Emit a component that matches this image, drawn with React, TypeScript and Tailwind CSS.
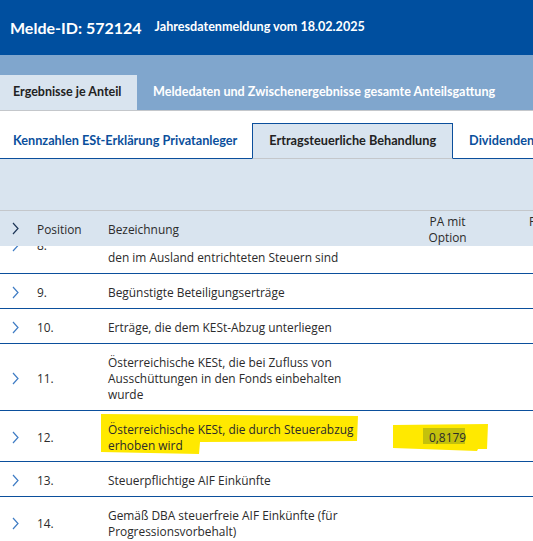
import React from "react";

const body = { fontFamily: '"Open Sans", "Liberation Sans", sans-serif' };
const head = { fontFamily: 'Lato, "Liberation Sans", sans-serif' };

type Row = { pos: string; lines: string[]; value?: string; mark?: boolean };

// row 8 is scrolled under the sticky header, only its last line shows
const rows: Row[] = [
  { pos: "9.", lines: ["Begünstigte Beteiligungserträge"] },
  { pos: "10.", lines: ["Erträge, die dem KESt-Abzug unterliegen"] },
  { pos: "11.", lines: ["Österreichische KESt, die bei Zufluss von", "Ausschüttungen in den Fonds einbehalten", "wurde"] },
  { pos: "12.", lines: ["Österreichische KESt, die durch Steuerabzug", "erhoben wird"], value: "0,8179", mark: true },
  { pos: "13.", lines: ["Steuerpflichtige AIF Einkünfte"] },
  { pos: "14.", lines: ["Gemäß DBA steuerfreie AIF Einkünfte (für", "Progressionsvorbehalt)"] },
];

function Chevron({ color }: { color: string }) {
  return (
    <svg width="7" height="13" viewBox="0 0 7 13" fill="none">
      <path d="M1 1 L6 6.5 L1 12" stroke={color} strokeWidth="1.2" />
    </svg>
  );
}

// marker strokes drawn over row 12
function Marker() {
  return (
    <svg className="absolute left-0 top-0 pointer-events-none" width="533" height="52" viewBox="0 0 533 52">
      <polygon points="101,3 358,5 357,30 200,31 199,43 101,41" fill="#ffe900" />
      <polygon points="393,14 488,13 487,38 478,38 477,40 393,37" fill="#ffe900" />
      <rect x="423" y="17" width="42" height="16" fill="#c4c10c" />
    </svg>
  );
}

export default function App() {
  return (
    <div className="w-[533px] h-[541px] overflow-hidden bg-white">
      <div className="w-[640px]">
        {/* title bar */}
        <div className="h-[55px] bg-[#004f9f] flex items-center pl-[10px] text-white" style={head}>
          <span className="text-[16px] font-bold">Melde-ID: 572124</span>
          <span className="ml-[13px] text-[12.6px] font-bold">Jahresdatenmeldung vom 18.02.2025</span>
        </div>

        {/* first tabs */}
        <div className="h-[55px] bg-[#80a6cd] flex items-end text-[12.5px] font-bold" style={head}>
          <div className="h-[35px] w-[137px] bg-[#d9e4ef] flex items-center pl-[13px] text-[#222]">Ergebnisse je Anteil</div>
          <div className="h-[35px] flex items-center pl-[16px] text-white text-[12.6px]">Meldedaten und Zwischenergebnisse gesamte Anteilsgattung</div>
        </div>
        <div className="h-px bg-[#c4c7cb]" />

        {/* second tabs */}
        <div className="h-[48px] flex items-end border-b border-[#0b4f9c] text-[12.7px] font-bold pl-[13px]" style={head}>
          <div className="h-[35px] flex items-center pr-[15px] text-[#0b4f9c]">Kennzahlen ESt-Erklärung Privatanleger</div>
          <div className="h-[36px] -mb-px flex items-center px-[16px] bg-[#d9e4ef] border border-[#0b4f9c] border-b-[#c4c7cb] text-[#222]">
            Ertragsteuerliche Behandlung
          </div>
          <div className="h-[35px] flex items-center pl-[16px] text-[#0b4f9c]">Dividenden</div>
        </div>
        <div className="h-[52px] bg-[#d9e4ef] border-b border-[#c4c7cb]" />

        {/* table */}
        <div className="text-[11.9px] text-[#2b2b2b] leading-[16px]" style={body}>
          <div className="h-[35px] bg-[#d9e4ef] flex items-center">
            <div className="w-[37px] pl-[12px] flex items-center"><Chevron color="#1d3557" /></div>
            <div className="w-[71px]">Position</div>
            <div className="w-[287px]">Bezeichnung</div>
            <div className="w-[105px] text-center">PA mit<br />Option</div>
            <div className="w-[104px] text-center">PA ohne<br />Option</div>
          </div>

          <div className="flex items-start overflow-hidden pt-[3px] pb-[8px] border-b border-[#0b4f9c]">
            <div className="w-[37px] pl-[12px] h-[16px] -mt-[12px] flex items-center">
              <Chevron color="#3f7cc4" />
            </div>
            <div className="w-[71px] -mt-[12px]">8.</div>
            <div className="w-[287px] whitespace-nowrap">den im Ausland entrichteten Steuern sind</div>
          </div>

          {rows.map((r) => (
            <div key={r.pos} className="relative flex items-center pt-[10px] pb-[8px] border-b border-[#0b4f9c]">
              {r.mark && <Marker />}
              <div className="relative w-[37px] pl-[12px] flex items-center">
                <Chevron color="#3f7cc4" />
              </div>
              <div className="relative w-[71px]">{r.pos}</div>
              <div className="relative w-[287px] whitespace-nowrap">
                {r.lines.map((l) => (
                  <div key={l}>{l}</div>
                ))}
              </div>
              <div className="relative w-[105px] text-center">{r.value}</div>
              <div className="relative w-[104px] text-center text-[#d08a00]">{r.value}</div>
            </div>
          ))}
        </div>
      </div>
    </div>
  );
}
